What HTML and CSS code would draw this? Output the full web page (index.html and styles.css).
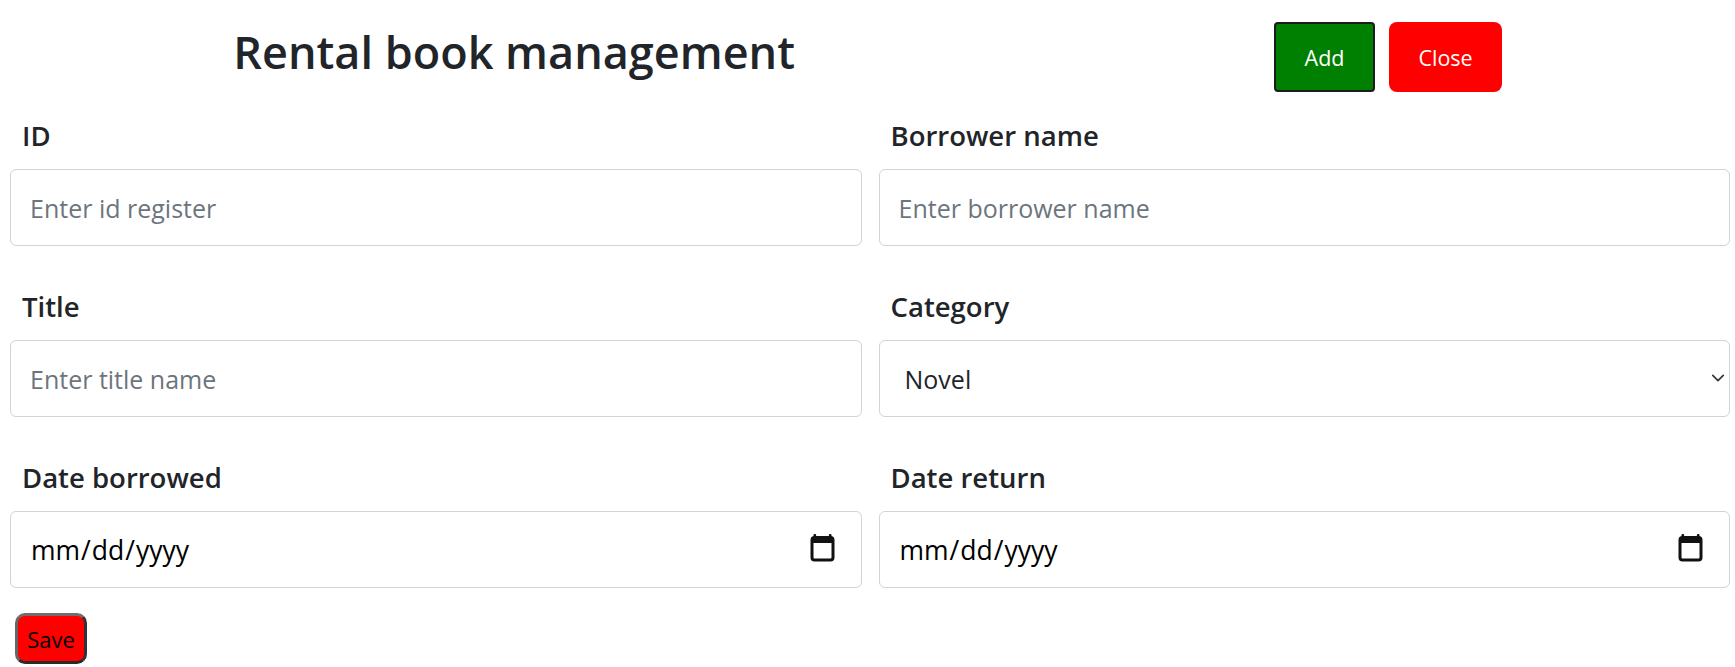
FILE: index.html
```html
<!DOCTYPE html>
<html lang="en">
<head>
<meta charset="utf-8">
<title>Rental book management</title>
<link rel="stylesheet" href="styles.css">
</head>
<body>
<header class="header">
  <h1 class="title">Rental book management</h1>
  <div class="actions">
    <button class="btn btn-add" type="button">Add</button>
    <button class="btn btn-close" type="button">Close</button>
  </div>
</header>
<form class="form">
  <div class="grid">
    <div class="field">
      <label class="label" for="id">ID</label>
      <input class="control" id="id" type="text" placeholder="Enter id register">
    </div>
    <div class="field">
      <label class="label" for="borrower">Borrower name</label>
      <input class="control" id="borrower" type="text" placeholder="Enter borrower name">
    </div>
    <div class="field">
      <label class="label" for="title">Title</label>
      <input class="control" id="title" type="text" placeholder="Enter title name">
    </div>
    <div class="field">
      <label class="label" for="category">Category</label>
      <div class="wrap">
        <select class="control select" id="category">
          <option>Novel</option>
          <option>Comic</option>
          <option>Science</option>
        </select>
        <svg class="chevron" viewBox="0 0 16 16" width="14" height="14" aria-hidden="true"><path d="M2 5l6 6 6-6" fill="none" stroke="#343a40" stroke-width="2" stroke-linecap="round" stroke-linejoin="round"/></svg>
      </div>
    </div>
    <div class="field">
      <label class="label" for="borrowed">Date borrowed</label>
      <div class="wrap">
        <input class="control date" id="borrowed" type="date">
        <svg class="cal" viewBox="0 0 25 28" width="25" height="28" aria-hidden="true"><rect x="3.5" y="0" width="2.6" height="5" rx="1" fill="#111"/><rect x="18.9" y="0" width="2.6" height="5" rx="1" fill="#111"/><rect x="2" y="3.5" width="21" height="22.5" rx="2.5" fill="none" stroke="#111" stroke-width="3"/><rect x="2" y="3.5" width="21" height="5.5" fill="#111"/></svg>
      </div>
    </div>
    <div class="field">
      <label class="label" for="return">Date return</label>
      <div class="wrap">
        <input class="control date" id="return" type="date">
        <svg class="cal" viewBox="0 0 25 28" width="25" height="28" aria-hidden="true"><rect x="3.5" y="0" width="2.6" height="5" rx="1" fill="#111"/><rect x="18.9" y="0" width="2.6" height="5" rx="1" fill="#111"/><rect x="2" y="3.5" width="21" height="22.5" rx="2.5" fill="none" stroke="#111" stroke-width="3"/><rect x="2" y="3.5" width="21" height="5.5" fill="#111"/></svg>
      </div>
    </div>
  </div>
  <button class="save" type="button">Save</button>
</form>
</body>
</html>
```
FILE: styles.css
```css
* { box-sizing: border-box; }
body {
  margin: 0;
  font-family: "Open Sans", "Noto Sans", sans-serif;
  color: #212529;
  background: #fff;
}
.header {
  display: flex;
  justify-content: space-around;
  align-items: flex-start;
  padding: 22px 0 23px;
}
.title {
  margin: 2px 0 0;
  font-size: 45px;
  font-weight: 600;
  line-height: 1.25;
  color: #212529;
}
.actions {
  display: flex;
  gap: 14px;
  margin-left: 12px;
}
.btn {
  height: 70px;
  padding: 0 29px;
  font-family: inherit;
  font-size: 21.5px;
  color: #fff;
  border: 0;
  cursor: pointer;
}
.btn-add {
  background: #008000;
  border: 2px solid #1c1c1c;
  border-radius: 4px;
}
.btn-close {
  background: #ff0000;
  border-radius: 8px;
}
.form {
  padding: 0 5px 0 10px;
}
.grid {
  display: grid;
  grid-template-columns: 1fr 1fr;
  column-gap: 17px;
  row-gap: 40px;
}
.field {
  display: flex;
  flex-direction: column;
}
.label {
  display: block;
  padding-left: 12px;
  font-size: 27.5px;
  font-weight: 600;
  line-height: 41px;
  margin-bottom: 13px;
}
.control {
  width: 100%;
  height: 77px;
  padding: 0 19px;
  font-family: inherit;
  font-size: 25px;
  color: #212529;
  background: #fff;
  border: 1px solid #ced4da;
  border-radius: 6px;
  outline: none;
}
.control::placeholder { color: #6c757d; }
.wrap { position: relative; }
.select {
  appearance: none;
  -webkit-appearance: none;
  padding-left: 25px;
}
.chevron {
  position: absolute;
  right: 5px;
  top: 31px;
  pointer-events: none;
}
.date {
  padding: 0 27px 0 19px;
  font-size: 26.5px;
  color: #000;
}
.date::-webkit-calendar-picker-indicator {
  width: 25px;
  height: 28px;
  padding: 0;
  margin: 0;
  opacity: 0;
}
.cal {
  position: absolute;
  right: 27px;
  top: 23px;
  pointer-events: none;
}
.save {
  margin: 25px 0 0 5px;
  width: 72px;
  height: 51px;
  padding: 0;
  font-family: inherit;
  font-size: 22px;
  color: #000;
  background: #ff0000;
  border: 3px solid;
  border-color: #6e6e6e #333 #2a2a2a #666;
  border-radius: 10px;
  cursor: pointer;
}
```
